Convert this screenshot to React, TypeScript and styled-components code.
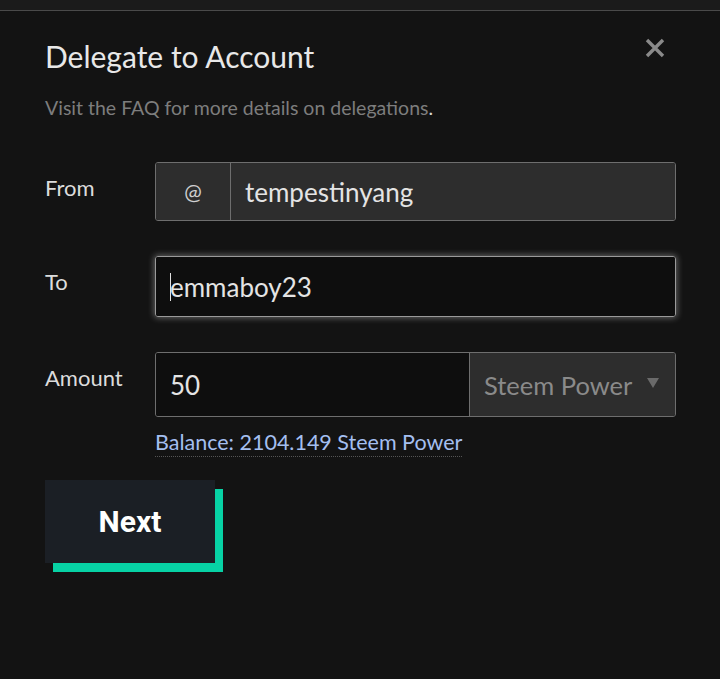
import React from 'react'
import styled, { createGlobalStyle } from 'styled-components'

const GlobalStyle = createGlobalStyle`
  html, body {
    margin: 0;
    padding: 0;
    background: #131313;
  }
  body {
    font-family: Lato, "Noto Sans", sans-serif;
    color: #e6e6e6;
  }
`

const App: React.FC = () => {
  return (
    <>
      <GlobalStyle />
      <Page>
        <TopBar />
        <Modal>
          <Header>
            <Title>Delegate to Account</Title>
            <CloseButton aria-label="Close">
              <svg width="22" height="22" viewBox="0 0 22 22">
                <path d="M3 3 L19 19 M19 3 L3 19" stroke="#8a8a8a" strokeWidth="3.4" strokeLinecap="butt" />
              </svg>
            </CloseButton>
          </Header>
          <Subtitle>
            Visit the FAQ for more details on delegations<Dot>.</Dot>
          </Subtitle>

          <Form>
            <Label>From</Label>
            <Group $height={59}>
              <Addon>@</Addon>
              <Field $disabled>tempestinyang</Field>
            </Group>

            <Label>To</Label>
            <Group $height={61} $focused>
              <Field>
                <Caret />
                emmaboy23
              </Field>
            </Group>

            <Label>Amount</Label>
            <div>
              <Group $height={65}>
                <Field>50</Field>
                <Select>
                  Steem Power
                  <Arrow />
                </Select>
              </Group>
              <Balance>Balance: 2104.149 Steem Power</Balance>
            </div>
          </Form>

          <NextButton>Next</NextButton>
        </Modal>
      </Page>
    </>
  )
}

export default App

const Page = styled.div`
  width: 720px;
  height: 679px;
  background: #131313;
  overflow: hidden;
`

const TopBar = styled.div`
  height: 10px;
  background: #1b1b1b;
  border-bottom: 1px solid #4a4a4a;
`

const Modal = styled.div`
  padding: 26px 44px 0 45px;
`

const Header = styled.div`
  display: flex;
  align-items: flex-start;
  justify-content: space-between;
`

const Title = styled.h2`
  margin: 0;
  font-size: 30px;
  font-weight: 400;
  line-height: 38px;
  color: #e8e8e8;
`

const CloseButton = styled.button`
  border: 0;
  background: none;
  padding: 0;
  margin: 0 10px 0 0;
  display: flex;
  cursor: pointer;
`

const Subtitle = styled.p`
  margin: 20px 0 0;
  font-size: 19.5px;
  line-height: 26px;
  color: #7d7d7d;
`

const Dot = styled.span`
  color: #d8d8d8;
`

const Form = styled.div`
  margin-top: 41px;
  display: grid;
  grid-template-columns: 110px 521px;
  row-gap: 35px;
`

const Label = styled.div`
  font-size: 22px;
  line-height: 28px;
  padding-top: 12px;
  color: #dcdcdc;
`

const Group = styled.div<{ $height: number; $focused?: boolean }>`
  display: flex;
  height: ${(p) => p.$height}px;
  box-sizing: border-box;
  border: 1px solid ${(p) => (p.$focused ? '#9a9a9a' : '#6e6e6e')};
  border-radius: 3px;
  overflow: hidden;
  box-shadow: ${(p) => (p.$focused ? '0 0 6px 1px rgba(200, 200, 200, 0.45)' : 'none')};
`

const Addon = styled.div`
  width: 74px;
  flex: none;
  display: flex;
  align-items: center;
  justify-content: center;
  background: #2d2d2d;
  border-right: 1px solid #6e6e6e;
  color: #cfcfcf;
  font-size: 21px;
`

const Field = styled.div<{ $disabled?: boolean }>`
  flex: 1;
  display: flex;
  align-items: center;
  padding: 0 14px;
  background: ${(p) => (p.$disabled ? '#2d2d2d' : '#0e0e0e')};
  color: #e4e4e4;
  font-size: 26px;
`

const Caret = styled.span`
  display: inline-block;
  width: 1px;
  height: 28px;
  background: #e0e0e0;
  margin-right: -1px;
`

const Select = styled.div`
  width: 206px;
  flex: none;
  display: flex;
  align-items: center;
  justify-content: space-between;
  padding: 0 16px 0 14px;
  box-sizing: border-box;
  background: #2d2d2d;
  border-left: 1px solid #6e6e6e;
  color: #8a8a8a;
  font-size: 25.5px;
`

const Arrow = styled.span`
  width: 0;
  height: 0;
  border-left: 6px solid transparent;
  border-right: 6px solid transparent;
  border-top: 10px solid #6a6a6a;
  margin-top: -4px;
`

const Balance = styled.span`
  display: inline-block;
  margin-top: 12px;
  font-size: 21.5px;
  line-height: 27px;
  color: #a4bff0;
  border-bottom: 1px dotted #555;
`

const NextButton = styled.button`
  margin-top: 23px;
  width: 170px;
  height: 83px;
  border: 0;
  background: #1b1f25;
  box-shadow: 8px 9px 0 0 #07d2a5;
  color: #ffffff;
  font-family: Roboto, sans-serif;
  font-weight: 700;
  font-size: 30px;
  cursor: pointer;
`
